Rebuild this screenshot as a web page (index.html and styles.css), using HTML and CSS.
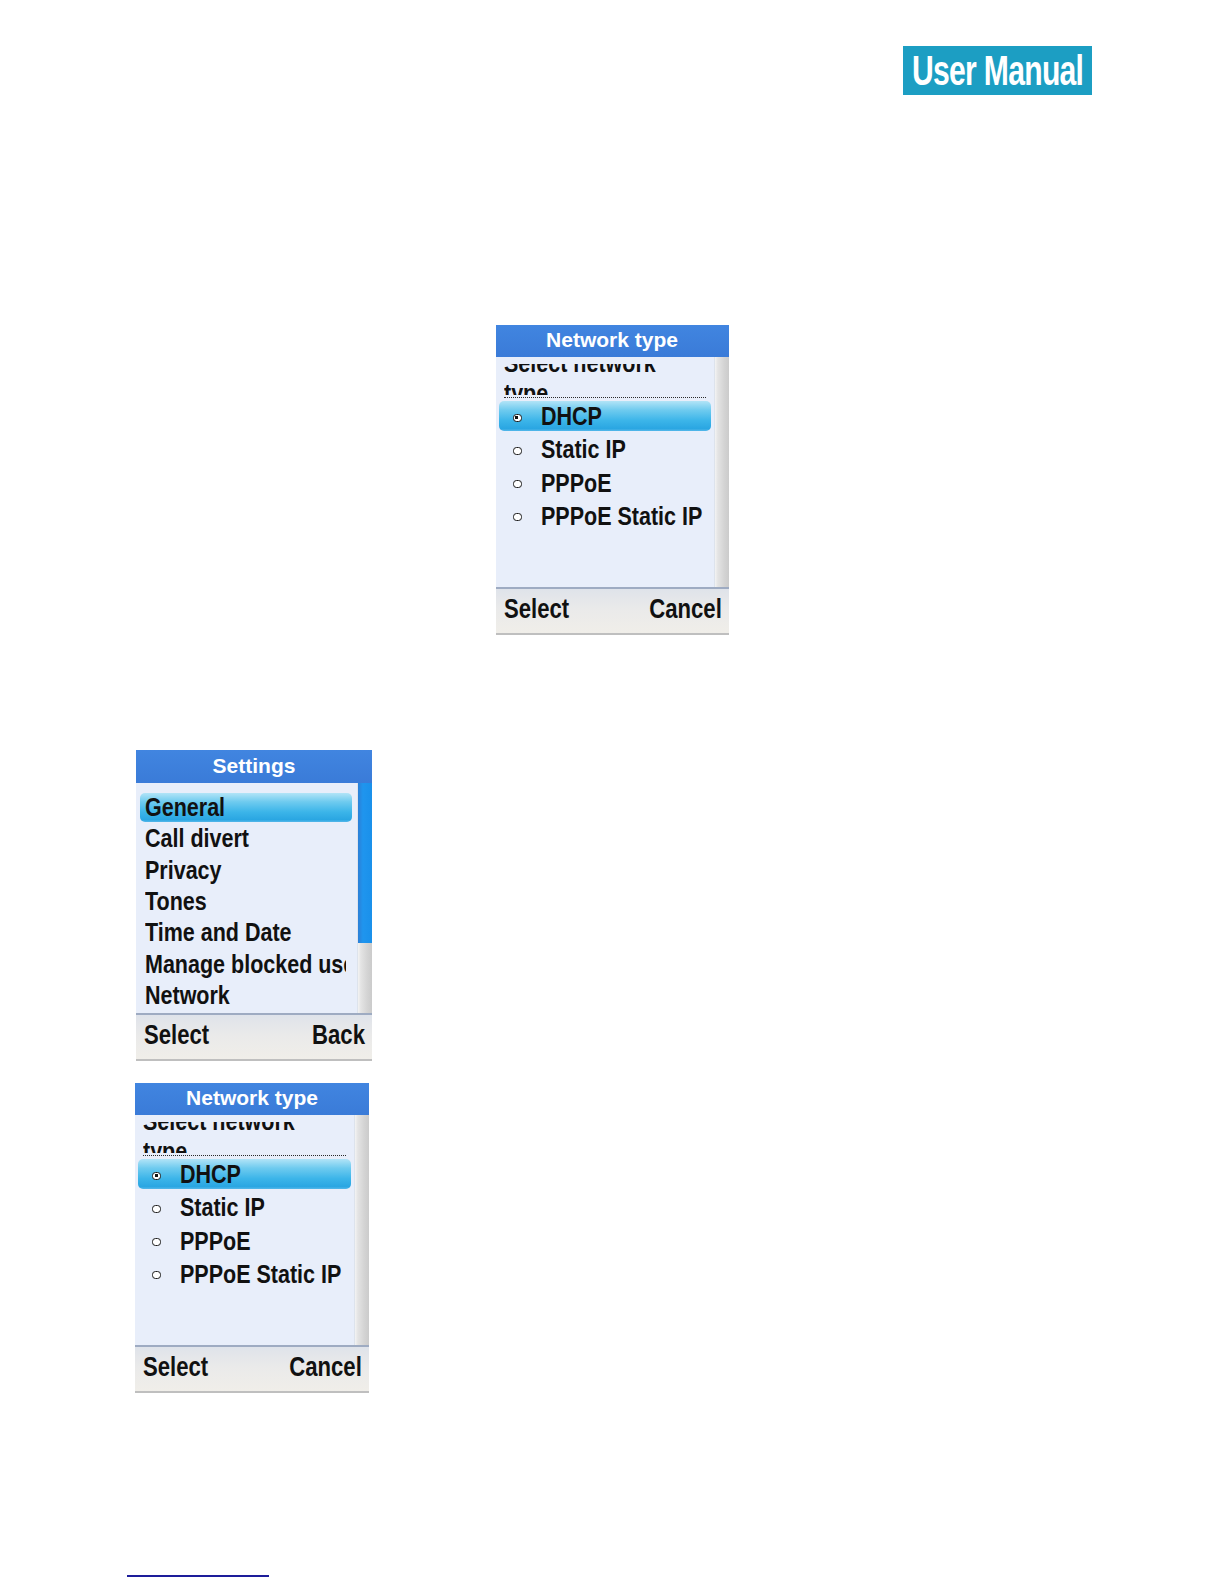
FILE: index.html
```html
<!DOCTYPE html>
<html lang="en">
<head>
<meta charset="utf-8">
<title>User Manual – Network type</title>
<link rel="stylesheet" href="styles.css">
</head>
<body>
  <header class="top">
    <div class="logo"><span class="logo-text">User Manual</span></div>
  </header>

  <section class="shot-center">
    <div class="phone phone-a">
      <div class="ph-title">Network type</div>
      <div class="ph-body">
        <div class="ph-list">
          <div class="ph-prompt"><div class="ph-prompt-clip"><div class="ph-prompt-text">Select network type</div></div></div>
          <div class="opt is-active"><span class="radio on"></span><span class="opt-label"><span class="sx">DHCP</span></span></div>
          <div class="opt"><span class="radio"></span><span class="opt-label"><span class="sx">Static IP</span></span></div>
          <div class="opt"><span class="radio"></span><span class="opt-label"><span class="sx">PPPoE</span></span></div>
          <div class="opt"><span class="radio"></span><span class="opt-label"><span class="sx">PPPoE Static IP</span></span></div>
        </div>
        <div class="ph-scroll"></div>
      </div>
      <div class="ph-foot"><span class="key key-l">Select</span><span class="key key-r">Cancel</span></div>
    </div>
  </section>

  <section class="shots-left">
    <div class="phone phone-b">
      <div class="ph-title ph-title-tall">Settings</div>
      <div class="ph-body">
        <div class="ph-list ph-list-menu">
          <div class="item is-active"><span class="item-label"><span class="sx">General</span></span></div>
          <div class="item"><span class="item-label"><span class="sx">Call divert</span></span></div>
          <div class="item"><span class="item-label"><span class="sx">Privacy</span></span></div>
          <div class="item"><span class="item-label"><span class="sx">Tones</span></span></div>
          <div class="item"><span class="item-label"><span class="sx">Time and Date</span></span></div>
          <div class="item"><span class="item-label"><span class="sx">Manage blocked users</span></span></div>
          <div class="item"><span class="item-label"><span class="sx">Network</span></span></div>
        </div>
        <div class="ph-scroll"><div class="thumb"></div></div>
      </div>
      <div class="ph-foot"><span class="key key-l">Select</span><span class="key key-r">Back</span></div>
    </div>

    <div class="phone phone-c">
      <div class="ph-title">Network type</div>
      <div class="ph-body">
        <div class="ph-list">
          <div class="ph-prompt"><div class="ph-prompt-clip"><div class="ph-prompt-text">Select network type</div></div></div>
          <div class="opt is-active"><span class="radio on"></span><span class="opt-label"><span class="sx">DHCP</span></span></div>
          <div class="opt"><span class="radio"></span><span class="opt-label"><span class="sx">Static IP</span></span></div>
          <div class="opt"><span class="radio"></span><span class="opt-label"><span class="sx">PPPoE</span></span></div>
          <div class="opt"><span class="radio"></span><span class="opt-label"><span class="sx">PPPoE Static IP</span></span></div>
        </div>
        <div class="ph-scroll"></div>
      </div>
      <div class="ph-foot"><span class="key key-l">Select</span><span class="key key-r">Cancel</span></div>
    </div>
  </section>

  <footer class="page-foot">
    <span class="rule"></span>
  </footer>
</body>
</html>
```

FILE: styles.css
```css
* { box-sizing: border-box; }

html, body {
  margin: 0;
  padding: 0;
  background: #ffffff;
}

body {
  width: 1224px;
  font-family: "Liberation Sans", Arial, sans-serif;
  color: #111111;
}

/* ---------- header logo ---------- */
.top {
  display: flex;
  justify-content: flex-end;
  padding: 46px 132px 0 0;
}

.logo {
  width: 189px;
  height: 49px;
  background: #1c9ec3;
  color: #ffffff;
  font-weight: 700;
  font-size: 43px;
  line-height: 49px;
  letter-spacing: -1px;
  padding-left: 9px;
  white-space: nowrap;
  overflow: hidden;
}

.logo-text {
  display: inline-block;
  transform: scaleX(0.7);
  transform-origin: left center;
}

/* ---------- layout of shots ---------- */
.shot-center {
  display: flex;
  justify-content: center;
  margin-top: 230px;
}

.shots-left {
  display: flex;
  flex-direction: column;
  align-items: flex-start;
  gap: 22px;
  padding-left: 135px;
  margin-top: 115px;
}

.phone-a { width: 233px; }
.phone-b { width: 236px; margin-left: 1px; }
.phone-c { width: 234px; }

/* ---------- phone screen ---------- */
.phone {
  display: flex;
  flex-direction: column;
}

.ph-title {
  height: 32px;
  background: linear-gradient(#4185e0, #3a7bd8);
  color: #ffffff;
  text-align: center;
  font-weight: 700;
  font-size: 21px;
  line-height: 30px;
}

.ph-title-tall {
  height: 33px;
  line-height: 31px;
}

.ph-body {
  display: flex;
  height: 230px;
  background: #e8eefa;
}

.ph-list {
  flex: 1;
  min-width: 0;
  display: flex;
  flex-direction: column;
}

.ph-scroll {
  width: 15px;
  background: linear-gradient(to right, #f3f3f3 0, #e4e4e4 20%, #d4d4d4 65%, #cbcbcb 100%);
  border-left: 1px solid #dde3ec;
}

.thumb {
  height: 160px;
  background: linear-gradient(to right, #2d7fd6 0, #1f95ee 35%, #1a90ea 100%);
}

/* condensed look for the handset font */
.sx {
  display: inline-block;
  transform: scaleX(0.86);
  transform-origin: left center;
}

/* prompt text, clipped at top and bottom */
.ph-prompt {
  margin: 7px 8px 0 8px;
  padding-bottom: 2px;
  border-bottom: 1px dotted #2a2a2a;
}

.ph-prompt-clip {
  height: 31px;
  overflow: hidden;
}

.ph-prompt-text {
  width: 200px;
  margin-top: -16.2px;
  font-weight: 700;
  font-size: 25px;
  line-height: 30px;
  transform: scaleX(0.86);
  transform-origin: left top;
}

/* radio options */
.opt {
  display: flex;
  align-items: center;
  height: 30px;
  margin: 0 3px 3.3px 3px;
  padding: 0 8px 0 14px;
  font-weight: 700;
  font-size: 25px;
  line-height: 30px;
  white-space: nowrap;
  border-radius: 5px;
}

.ph-prompt + .opt { margin-top: 3px; }

.opt.is-active,
.item.is-active {
  background: linear-gradient(#b2e4f7 0%, #6fcbef 30%, #3cb5e9 65%, #2aa6e2 92%, #56b8ea 100%);
}

.radio {
  position: relative;
  flex: none;
  width: 9px;
  height: 8px;
  margin-top: 3px;
  margin-right: 19px;
  border: 1.5px solid #1b1b1b;
  border-radius: 3.5px;
  background: #ffffff;
}

.radio.on::after {
  content: "";
  position: absolute;
  left: 1.5px;
  top: 1px;
  width: 3px;
  height: 3px;
  background: #111111;
}

.opt-label {
  flex: 1;
  min-width: 0;
  overflow: hidden;
}

/* menu items */
.ph-list-menu {
  padding-top: 8.8px;
}

.item {
  height: 29px;
  margin: 1.2px 5px 1.2px 4px;
  padding: 0 6px 0 5px;
  font-weight: 700;
  font-size: 25px;
  line-height: 29px;
  white-space: nowrap;
  border-radius: 5px;
}

.item-label {
  display: block;
  overflow: hidden;
}

/* soft key bar */
.ph-foot {
  display: flex;
  justify-content: space-between;
  height: 48px;
  padding: 0 7px 5px 8px;
  border-top: 2px solid #9eabc2;
  border-bottom: 2px solid #bfbfbf;
  background: linear-gradient(#dfe3ea 0%, #eaeaea 45%, #f0eee9 100%);
  font-weight: 700;
  font-size: 28px;
  line-height: 39px;
  white-space: nowrap;
}

.key {
  display: inline-block;
  transform: scaleX(0.79);
}

.key-l { transform-origin: left center; }
.key-r { transform-origin: right center; }

/* bottom rule */
.page-foot {
  padding-left: 127px;
  margin-top: 182px;
}

.rule {
  display: block;
  width: 142px;
  height: 2px;
  background: #1d1d9a;
}
```
